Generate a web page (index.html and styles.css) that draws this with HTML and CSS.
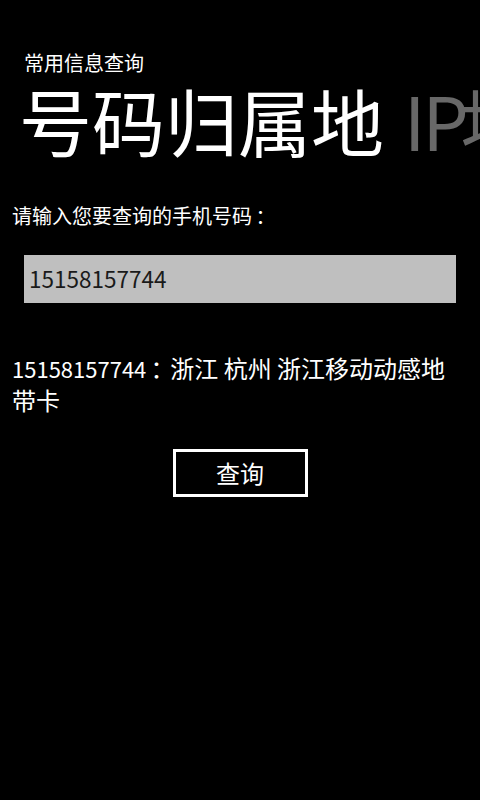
FILE: index.html
```html
<!DOCTYPE html>
<html lang="zh-CN">
<head>
<meta charset="utf-8">
<title>常用信息查询</title>
<link rel="stylesheet" href="styles.css">
</head>
<body>
<div class="page">
  <header class="pivot-head">
    <div class="app-title">常用信息查询</div>
    <div class="pivot-items">
      <span class="pivot-item active">号码归属地</span><span class="pivot-item"><span class="latin">IP</span>地址查询</span>
    </div>
  </header>
  <main class="pivot-body">
    <div class="label">请输入您要查询的手机号码<span class="punct">：</span></div>
    <div class="textbox">15158157744</div>
    <div class="result"><span class="num">15158157744</span><span class="punct">：</span>浙江 杭州 浙江移动动感地带卡</div>
    <div class="actions">
      <button class="btn" type="button">查询</button>
    </div>
  </main>
</div>
</body>
</html>
```

FILE: styles.css
```css
html, body {
  margin: 0;
  padding: 0;
  background: #000;
}

body {
  color: #fff;
  font-family: "Noto Sans CJK SC", "Noto Sans", sans-serif;
  width: 480px;
  height: 800px;
  overflow: hidden;
}

.page {
  display: flex;
  flex-direction: column;
}

.pivot-head {
  padding-top: 49px;
  display: flex;
  flex-direction: column;
  gap: 2px;
}

.app-title {
  font-size: 20px;
  line-height: 28px;
  padding-left: 24px;
}

.pivot-items {
  font-size: 73px;
  line-height: 80px;
  white-space: nowrap;
  overflow: hidden;
  padding-left: 19px;
}

.pivot-item {
  color: #686868;
  margin-left: 20px;
}

.pivot-item .latin {
  letter-spacing: -3px;
  margin-right: -5px;
}

.pivot-item.active {
  color: #fff;
  margin-left: 0;
}

.pivot-body {
  display: flex;
  flex-direction: column;
  padding: 43px 12px 0 12px;
}

.punct {
  padding-left: 0.17em;
  margin-right: -0.17em;
}

.label {
  font-size: 20px;
  line-height: 28px;
}

.textbox {
  margin: 25px 12px 0 12px;
  height: 48px;
  box-sizing: border-box;
  background: #bfbfbf;
  color: #1a1a1a;
  font-size: 22.5px;
  line-height: 46px;
  padding: 0 0 2px 5px;
}

.result {
  margin-top: 49px;
  font-size: 24px;
  line-height: 32px;
}

.result .num {
  font-size: 22px;
}

.actions {
  display: flex;
  justify-content: center;
  margin-top: 33px;
  margin-left: -12px;
  margin-right: -12px;
}

.btn {
  width: 135px;
  height: 48px;
  box-sizing: border-box;
  border: 3px solid #fff;
  background: transparent;
  color: #fff;
  font-family: "Noto Sans CJK SC", "Noto Sans", sans-serif;
  font-size: 24px;
  line-height: 40px;
  padding: 0;
}
```
